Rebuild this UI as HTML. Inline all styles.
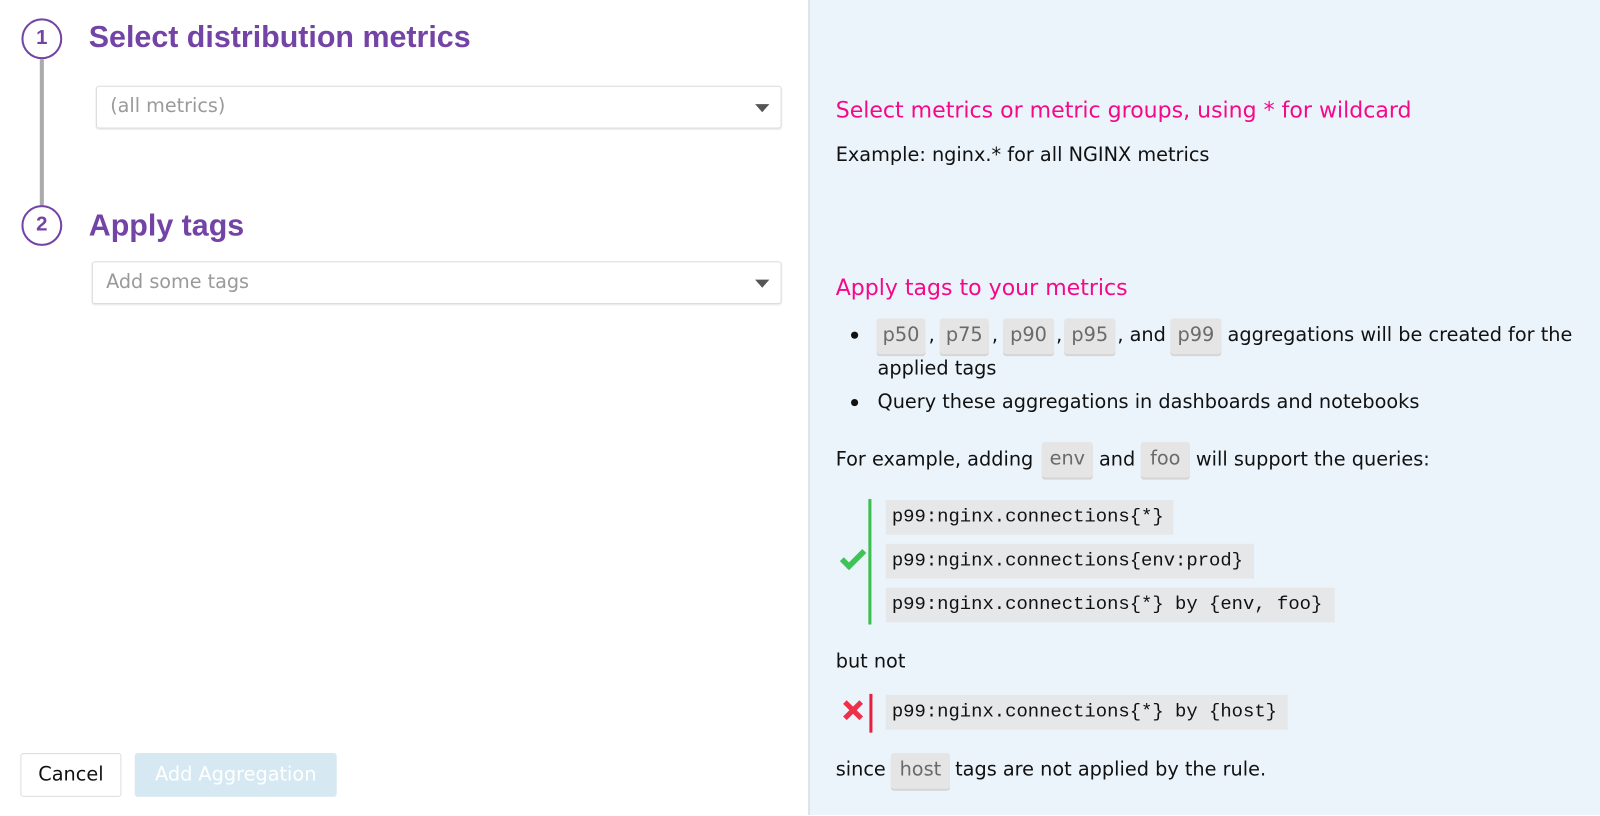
<!DOCTYPE html>
<html><head><meta charset="utf-8"><style>
*{margin:0;padding:0;box-sizing:border-box}
body{width:1600px;height:815px;overflow:hidden;background:#fff;font-family:"DejaVu Sans","Liberation Sans",sans-serif;position:relative;color:#111}
#w{position:absolute;left:0;top:0;width:1568px;height:800px;transform:scale(1.0204);transform-origin:0 0}
.a{position:absolute;white-space:nowrap}
.circ{position:absolute;width:40px;height:40px;border:2.5px solid #7443a6;border-radius:50%;background:#fff;color:#7443a6;font-weight:bold;font-size:20px;text-align:center;line-height:35px;font-family:"Liberation Sans",sans-serif}
.h{position:absolute;color:#7443a6;font-weight:bold;font-size:29.8px;line-height:34px;font-family:"Liberation Sans",sans-serif;white-space:nowrap}
.sel{position:absolute;border:1.5px solid #dcdcdc;border-radius:3px;background:#fff;box-shadow:0 1px 1px #eee}
.sel span{position:absolute;left:13px;top:9px;font-size:18.8px;color:#9a9a9a}
.arr{position:absolute;right:11px;top:17px;width:0;height:0;border-left:7px solid transparent;border-right:7px solid transparent;border-top:8px solid #555}
.right{position:absolute;top:0;height:815px;background:#ebf4fb;border-left:2px solid #dde3e8}
.t{position:absolute;font-size:18.9px;line-height:24px;white-space:nowrap}
.pk{position:absolute;font-size:21.6px;color:#f5098a;white-space:nowrap;line-height:28px}
.tag{position:absolute;height:35px;background:#e5e5e5;border-radius:3px;box-shadow:0 2px 0 #d5d5d5;color:#6a6a6a;font-size:18.9px;text-align:center;line-height:33px}
.code{position:absolute;height:34px;background:#e6e7e9;font-family:"Liberation Mono",monospace;font-size:18.5px;line-height:34px;padding-left:6px;color:#111;white-space:nowrap}
.dot{position:absolute;width:7px;height:7px;border-radius:50%;background:#111}
</style></head><body>
<div class="right" style="left:808px;width:792px"></div>
<div id="w">
<div class="a" style="left:39px;top:58px;width:4px;height:146px;background:#ababab"></div>
<div class="circ" style="left:21px;top:18px">1</div>
<div class="circ" style="left:21px;top:201px">2</div>
<div class="h" style="left:87px;top:20px">Select distribution metrics</div>
<div class="h" style="left:87px;top:205px">Apply tags</div>
<div class="sel" style="left:94px;top:84px;width:672px;height:42px"><span>(all metrics)</span><div class="arr"></div></div>
<div class="sel" style="left:90px;top:256px;width:676px;height:42px"><span>Add some tags</span><div class="arr"></div></div>
<div class="a" style="left:20px;top:738px;width:99px;height:43px;border:1.5px solid #ddd;border-radius:3px;font-size:18.9px;line-height:40px;text-align:center">Cancel</div>
<div class="a" style="left:132px;top:738px;width:198px;height:43px;background:#d6e9f3;border-radius:3px;font-size:18.9px;line-height:43px;text-align:center;color:#fff">Add Aggregation</div>

<div class="pk" style="left:819px;top:95px">Select metrics or metric groups, using * for wildcard</div>
<div class="t" style="left:819px;top:140px">Example: nginx.* for all NGINX metrics</div>
<div class="pk" style="left:819px;top:269px">Apply tags to your metrics</div>
<div class="dot" style="left:834px;top:325px"></div>
<div class="dot" style="left:834px;top:391px"></div>
<div class="tag" style="left:859px;top:312px;width:48px">p50</div><div class="t" style="left:910px;top:316px">,</div>
<div class="tag" style="left:921px;top:312px;width:48px">p75</div><div class="t" style="left:972px;top:316px">,</div>
<div class="tag" style="left:983px;top:312px;width:50px">p90</div><div class="t" style="left:1035px;top:316px">,</div>
<div class="tag" style="left:1043px;top:312px;width:50px">p95</div><div class="t" style="left:1095px;top:316px">, and</div>
<div class="tag" style="left:1147px;top:312px;width:50px">p99</div>
<div class="t" style="left:1203px;top:316px">aggregations will be created for the</div>
<div class="t" style="left:860px;top:349px">applied tags</div>
<div class="t" style="left:860px;top:382px">Query these aggregations in dashboards and notebooks</div>
<div class="t" style="left:819px;top:438px">For example, adding</div>
<div class="tag" style="left:1021px;top:433px;width:50px">env</div>
<div class="t" style="left:1077px;top:438px">and</div>
<div class="tag" style="left:1118px;top:433px;width:48px">foo</div>
<div class="t" style="left:1172px;top:438px">will support the queries:</div>
<div class="a" style="left:851px;top:489px;width:3px;height:123px;background:#3cbf4e"></div>
<svg class="a" style="left:822px;top:537px" width="28" height="22" viewBox="0 0 28 22"><path d="M3 11 L10 18 L25 3" fill="none" stroke="#3fc356" stroke-width="5.5"/></svg>
<div class="code" style="left:868px;top:490px;width:282px">p99:nginx.connections{*}</div>
<div class="code" style="left:868px;top:533px;width:361px">p99:nginx.connections{env:prod}</div>
<div class="code" style="left:868px;top:576px;width:440px">p99:nginx.connections{*} by {env, foo}</div>
<div class="t" style="left:819px;top:636px">but not</div>
<svg class="a" style="left:825px;top:685px" width="22" height="22" viewBox="0 0 22 22"><path d="M3 3 L19 19 M19 3 L3 19" stroke="#ef3049" stroke-width="5"/></svg>
<div class="a" style="left:852px;top:680px;width:3px;height:38px;background:#e8203f"></div>
<div class="code" style="left:868px;top:681px;width:394px">p99:nginx.connections{*} by {host}</div>
<div class="t" style="left:819px;top:742px">since</div>
<div class="tag" style="left:873px;top:738px;width:58px">host</div>
<div class="t" style="left:936px;top:742px">tags are not applied by the rule.</div>
</div>
</body></html>
